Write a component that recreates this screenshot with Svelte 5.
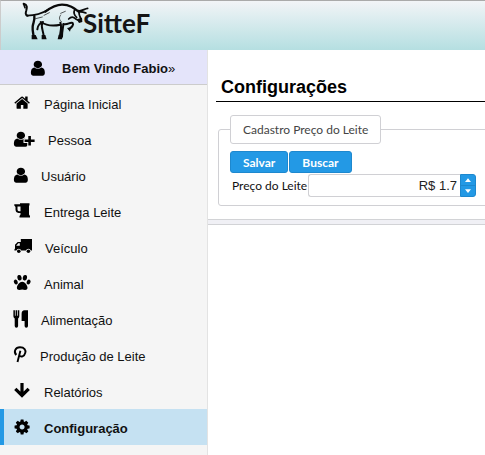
<script>
  const items = [
    { label: 'Página Inicial', icon: 'home', w: 16 },
    { label: 'Pessoa', icon: 'plus', w: 20 },
    { label: 'Usuário', icon: 'user', w: 13 },
    { label: 'Entrega Leite', icon: 'mug', w: 16 },
    { label: 'Veículo', icon: 'truck', w: 17 },
    { label: 'Animal', icon: 'paw', w: 16 },
    { label: 'Alimentação', icon: 'cutlery', w: 13 },
    { label: 'Produção de Leite', icon: 'pin', w: 12 },
    { label: 'Relatórios', icon: 'arrow', w: 16 },
    { label: 'Configuração', icon: 'cog', w: 16, active: true }
  ];
  let cents = $state(17);
  const price = $derived(`R$ ${(cents / 10).toFixed(1)}`);
</script>

{#snippet icon(name, w)}
  <svg class="icon" width={w} height="18" viewBox="0 0 {w} 18" aria-hidden="true">
    {#if name === 'home'}
      <path transform="translate(-0.5 0) scale(.0096)" d="M1472 992v480q0 26-19 45t-45 19h-384v-384h-256v384h-384q-26 0-45-19t-19-45v-480q0-1 .5-3t.5-3l575-474 575 474q1 2 1 6zm223-69l-62 74q-8 9-21 11h-3q-13 0-21-7l-692-577-692 577q-12 8-24 7-13-2-21-11l-62-74q-8-10-7-23.5t11-21.5l719-599q32-26 76-26t76 26l244 204v-195q0-14 9-23t23-9h192q14 0 23 9t9 23v408l219 182q10 8 11 21.5t-7 23.5z" />
    {:else if name === 'user' || name === 'plus'}
      <path transform="translate(-2.9 .4) scale(.0109 .0098)" d="M1536 1399q0 109-62.5 187t-150.5 78h-854q-88 0-150.5-78t-62.5-187q0-85 8.5-160.5t31.5-152 58.5-131 94-89 134.5-34.5q131 128 313 128t313-128q76 0 134.5 34.5t94 89 58.5 131 31.5 152 8.5 160.5zm-256-887q0 159-112.5 271.5t-271.5 112.5-271.5-112.5-112.5-271.5 112.5-271.5 271.5-112.5 271.5 112.5 112.5 271.5z" />
      {#if name === 'plus'}
        <path d="M15.600 5.500v11.500M9.500 10.800h11" stroke="#f5f5f5" stroke-width="4.500" />
        <path d="M15.600 6v9.600M10.600 10.800h10" stroke="#000" stroke-width="2.600" />
      {/if}
    {:else if name === 'mug'}
      <path fill-rule="evenodd" d="M6 1.200H15.500V3L15 4v8.500l1 1.500v1.500H5.500V14l1-1.500V11H4.500Q1.500 10.500 1.500 7.500V5L.3 3.500V2.200H6zM6.500 4.500H3.500V7.500q0 1.700 1.500 1.700h1.500z" />
    {:else if name === 'truck'}
      <path fill-rule="evenodd" d="M6.800 1H18v11.500h-1.200a2.500 2.500 0 0 0-4.800 0H7.200a2.500 2.500 0 0 0-4.800 0H.4v-1L1 10.500V6.800L3.700 4h3.100zM2.200 7.800h3.600V5.300H4.300z" />
      <circle cx="4.800" cy="13.200" r="1.800" /><circle cx="14.400" cy="13.200" r="1.800" />
    {:else if name === 'paw'}
      <ellipse cx="5.500" cy="3.800" rx="2.100" ry="2.800" transform="rotate(-12 5.500 3.800)" />
      <ellipse cx="10.900" cy="3.800" rx="2.100" ry="2.800" transform="rotate(12 10.900 3.800)" />
      <ellipse cx="1.800" cy="8" rx="1.900" ry="2.500" transform="rotate(-25 1.800 8)" />
      <ellipse cx="14.600" cy="8" rx="1.900" ry="2.500" transform="rotate(25 14.600 8)" />
      <path d="M8.200 7.800c2.500 0 5.300 3.600 5.300 6 0 3-3.200 2.200-5.300 1.800-2.100.4-5.300 1.200-5.300-1.800C2.900 11.400 5.700 7.800 8.200 7.800z" />
    {:else if name === 'cutlery'}
      <path d="M-.6.300H.9V5.800h.7V.300h1.500V5.800h.7V.300h1.500V6.300Q5.300 7.800 4.100 8.400V16q0 1.700-1.700 1.700T.7 16V8.400Q-.6 7.800-.6 6.300zM10.500.300H14V16q0 1.700-1.700 1.700T10.600 16v-5H7.600V4q0-3.700 2.900-3.700z" />
    {:else if name === 'pin'}
      <path d="M2.300 9C-.8 5.500 1.500 1.300 6 1.300c4.500 0 6 2.800 5.300 5.500-1 4-4.500 4.500-5.800 2.700M6.400 4.700L3.500 16" fill="none" stroke="#000" stroke-width="1.900" />
    {:else if name === 'arrow'}
      <path d="M8 1v12M1.300 6.800L8 13.500l6.700-6.700" fill="none" stroke="#000" stroke-width="3.200" />
    {:else}
      <path transform="translate(-.7 .2) scale(.0098)" d="M1152 896q0-106-75-181t-181-75-181 75-75 181 75 181 181 75 181-75 75-181zm512-109v222q0 12-8 23t-20 13l-185 28q-19 54-39 91 35 50 107 138 10 12 10 25t-9 23q-27 37-99 108t-94 71q-12 0-26-9l-138-108q-44 23-91 38-16 136-29 186-7 28-36 28h-222q-14 0-24.500-8.500t-11.500-21.500l-28-184q-49-16-90-37l-141 107q-10 9-25 9-14 0-25-11-126-114-165-168-7-10-7-23 0-12 8-23 15-21 51-66.500t54-70.500q-27-50-41-99l-183-27q-13-2-21-12.500t-8-23.500v-222q0-12 8-23t19-13l186-28q14-46 39-92-40-57-107-138-10-12-10-24 0-10 9-23 26-36 98.500-107.500t94.500-71.500q13 0 26 10l138 107q44-23 91-38 16-136 29-186 7-28 36-28h222q14 0 24.500 8.500t11.500 21.500l28 184q49 16 90 37l142-107q9-9 24-9 13 0 25 10 129 119 165 170 7 8 7 22 0 12-8 23-15 21-51 66.500t-54 70.500q26 50 41 98l183 28q13 2 21 12.500t8 23.500z" />
    {/if}
  </svg>
{/snippet}

<div class="page">
  <header>
    <svg class="bull" width="68" height="40" viewBox="66 6 204 120" aria-hidden="true">
      <g fill="none" stroke="#0a0a0a" stroke-linecap="round" stroke-linejoin="round">
        <path d="M71 11c12 3 10 12 8 20-2 7-4 14 4 16" stroke-width="6" />
        <path d="M71 12l4 11M81 47c22 0 45-6 66-19" stroke-width="5" />
        <path d="M136 35c16-12 30-21 50-21 24 0 36 10 50 21" stroke-width="7" />
        <path d="M103 48c2 14-4 20-5 32-1 12 2 20 3 30" stroke-width="7" />
        <path d="M112 88c1-12 10-20 17-22M127 68c-6 14 4 24 4 43" stroke-width="6" />
        <path d="M122 66c16 10 37 13 59 8" stroke-width="6" />
        <path d="M181 68c6 14-1 28-1 42M190 74c-1 12-4 20-4 36" stroke-width="6" />
        <path d="M190 72c14 4 19-7 28-3 4 5-2 12-10 18" stroke-width="6" />
        <path d="M206 57c5-5 10-7 16-4 5 5 11 8 16 9" stroke-width="5" />
        <path d="M224 29c-4 9-1 17 6 23M237 34c-1 10 2 16 7 25" stroke-width="5" />
        <path d="M235 32c10 3 18-6 28-7M239 36c8-1 13 1 19 3" stroke-width="5" />
        <path d="M182 45c-7 9-3 16 3 21M107 56l20-5M148 38l-16 8M196 34l-14 6" stroke-width="2" />
      </g>
      <path d="M95 105h12l6 13H95zM125 105h11l4 13h-15zM176 104h12l-2 14h-13zM201 84l12-2-3 13zM230 58l16-5 1 13-10 3z" fill="#0a0a0a" />
    </svg>
    <span class="brand">SitteF</span>
  </header>
  <div class="body">
    <aside>
      <div class="user">{@render icon('user', 14)}<span><b>Bem Vindo Fabio</b>»</span></div>
      <nav>
        {#each items as item}
          <a href="#{item.icon}" class:active={item.active}>{@render icon(item.icon, item.w)}<span>{item.label}</span></a>
        {/each}
      </nav>
    </aside>
    <main>
      <section>
        <h1>Configurações</h1>
        <fieldset>
          <legend>Cadastro Preço do Leite</legend>
          <div class="actions">
            <button type="button">Salvar</button>
            <button type="button">Buscar</button>
          </div>
          <div class="field">
            <label for="price">Preço do Leite</label>
            <input id="price" type="text" value={price} />
            <div class="spin">
              <button type="button" aria-label="Aumentar" onclick={() => cents++}><svg width="6" height="4" viewBox="0 0 8 5"><path d="M0 5l4-5 4 5z" /></svg></button>
              <button type="button" aria-label="Diminuir" onclick={() => cents--}><svg width="6" height="4" viewBox="0 0 8 5"><path d="M0 0l4 5 4-5z" /></svg></button>
            </div>
          </div>
        </fieldset>
      </section>
      <div class="split"></div>
    </main>
  </div>
</div>

<style>
  :global(body) { margin: 0; background: #fff; }
  .page {
    display: flex;
    flex-direction: column;
    min-height: 100vh;
    overflow: hidden;
    font: 13px "Liberation Sans", Arial, sans-serif;
    color: #111;
  }
  header {
    display: flex;
    box-sizing: border-box;
    height: 50px;
    padding: 1px 0 0 21px;
    border-top: 1px solid #aaa;
    border-left: 1px solid #ccc;
    background: linear-gradient(#f2f4f7, #b5dfe1);
  }
  .bull { flex: none; margin-right: -7px; }
  .brand { font: bold 26px/42px Lato, sans-serif; color: #151515; }
  .body { display: flex; flex: 1; }
  aside {
    box-sizing: border-box;
    flex: none;
    width: 208px;
    background: #f5f5f5;
    border-right: 1px solid #e3e3e3;
  }
  .user {
    display: flex;
    align-items: center;
    box-sizing: border-box;
    height: 35px;
    padding: 2px 0 0 31px;
    gap: 17px;
    background: #e4e4fa;
    border-bottom: 1px solid #ccc;
  }
  .icon { flex: none; fill: #000; overflow: visible; }
  nav a {
    display: flex;
    align-items: center;
    box-sizing: border-box;
    height: 36px;
    padding-left: 10px;
    gap: 14px;
    border-left: 4px solid transparent;
    color: #111;
    text-decoration: none;
  }
  nav span { padding-top: 3px; }
  nav .active { background: #c5e1f2; border-color: #2399e5; font-weight: bold; }
  main { flex: 1; min-width: 0; }
  section { padding: 27px 0 13px 8px; }
  h1 {
    margin: 0;
    padding: 0 0 3px 5px;
    border-bottom: 1px solid #000;
    font-size: 18px;
    line-height: 21px;
    color: #000;
  }
  fieldset {
    margin: 13px -4px 0 2px;
    padding: 7px 12px 8px 11px;
    min-width: 0;
    border: 1px solid #d0d0d4;
    border-radius: 3px;
    font: 12px Lato, sans-serif;
  }
  legend {
    box-sizing: border-box;
    height: 29px;
    padding: 0 12px;
    border: 1px solid #d0d0d4;
    border-radius: 3px;
    line-height: 27px;
    color: #444;
  }
  .actions { display: flex; gap: 1px; }
  .actions button {
    height: 22px;
    padding: 0 12px;
    border: 1px solid #1e88ce;
    border-radius: 3px;
    background: #2399e5;
    color: #fff;
    font: bold 12px Lato, sans-serif;
  }
  .field { display: flex; align-items: center; padding: 1px 0 0 2px; }
  label { flex: none; margin-right: 1px; }
  input {
    box-sizing: border-box;
    flex: 1;
    min-width: 0;
    height: 23px;
    padding: 0 3px;
    border: 1px solid #d0d0d4;
    border-right: 0;
    border-radius: 3px 0 0 3px;
    font: 13px "Liberation Sans", Arial, sans-serif;
    color: #222;
    text-align: right;
  }
  .spin {
    display: flex;
    flex-direction: column;
    box-sizing: border-box;
    width: 16px;
    height: 23px;
    border: 1px solid #1e88ce;
    border-radius: 0 3px 3px 0;
    background: #2399e5;
  }
  .spin button {
    display: flex;
    flex: 1;
    align-items: center;
    justify-content: center;
    min-height: 0;
    padding: 0;
    border: 0;
    background: none;
  }
  .spin button + button { border-top: 1px solid #1e88ce; }
  .spin path { fill: #fff; }
  .split {
    height: 4px;
    border: solid #d2d3d6;
    border-width: 1px 0;
    background: #f0f0f5;
  }
</style>
